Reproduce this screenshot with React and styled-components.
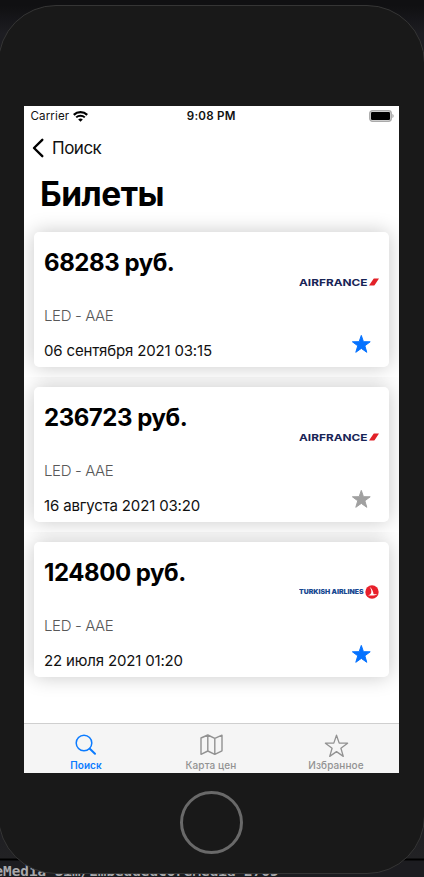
import React from "react";
import styled, { createGlobalStyle, css } from "styled-components";

const GlobalStyle = createGlobalStyle`
  *, *::before, *::after { box-sizing: border-box; }
  body {
    margin: 0;
    overflow: hidden;
    background: #1b1b1f;
    font-family: Inter, "Liberation Sans", sans-serif;
    color: #000;
  }
`;

const Desktop = styled.div`
  position: relative;
  width: 424px;
  height: 877px;
  overflow: hidden;
  background: linear-gradient(#101012 0, #101012 6px, #1d1d22 34px, #1d1d22 820px, #222224 858px, #000 859px, #000 860px, #1c1c20 861px);
`;

const Console = styled.div`
  position: absolute;
  left: -5.5px;
  top: 863px;
  font: bold 14.3px/17px "DejaVu Sans Mono", monospace;
  color: #a9a9ac;
  white-space: pre;
`;

const Phone = styled.div`
  position: relative;
  display: flex;
  flex-direction: column;
  align-items: center;
  width: 427px;
  height: 869px;
  margin: 5px 0 0 -2px;
  padding-top: 100px;
  border: 1px solid #353535;
  border-radius: 58px;
  background: #191919;
`;

const Screen = styled.main`
  display: flex;
  flex-direction: column;
  width: 375px;
  height: 667px;
  overflow: hidden;
  background: #fff;
`;

const HomeButton = styled.div`
  width: 63px;
  height: 63px;
  margin-top: 18px;
  border: 3px solid #696969;
  border-radius: 50%;
`;

const StatusBar = styled.div`
  display: grid;
  grid-template-columns: 1fr auto 1fr;
  align-items: center;
  height: 20px;
  padding: 0 5px 0 6.5px;
  font-size: 11.6px;
  line-height: 20px;
  color: #111;
`;

const Carrier = styled.div`
  display: flex;
  align-items: center;
  gap: 4px;
  letter-spacing: 0.1px;
`;

const Clock = styled.div`
  margin-right: 2px;
  font-weight: 600;
  letter-spacing: 0.25px;
`;

const BatterySlot = styled.div`
  display: flex;
  justify-content: flex-end;
`;

const NavBar = styled.nav`
  display: flex;
  align-items: center;
  height: 44px;
  padding-left: 8px;
  gap: 8px;
  font-size: 17px;
  letter-spacing: -0.5px;
  color: #111;
`;

const Title = styled.h1`
  height: 52px;
  margin: 0;
  padding: 4px 0 0 16px;
  font-size: 33.5px;
  line-height: 41px;
  font-weight: 700;
  letter-spacing: -0.5px;
`;

const List = styled.section`
  display: flex;
  flex-direction: column;
  flex: 1;
`;

const Cell = styled.div`
  height: 155px;
  padding: 10px;
  & + & { clip-path: inset(0 -20px -20px -20px); }
`;

const Card = styled.article`
  display: flex;
  justify-content: space-between;
  height: 135px;
  padding: 0 10px;
  border-radius: 5px;
  background: #fff;
  box-shadow: 0 0 20px rgba(0, 0, 0, 0.22);
`;

const Details = styled.div`
  display: flex;
  flex-direction: column;
  white-space: nowrap;
`;

const Price = styled.div`
  margin-top: 16px;
  font-size: 24px;
  line-height: 30px;
  font-weight: 700;
  letter-spacing: -0.45px;
`;

const Route = styled.div`
  margin-top: 28px;
  font-size: 15px;
  line-height: 20px;
  font-weight: 300;
  letter-spacing: -0.38px;
  color: #585858;
`;

const DateLine = styled.div`
  margin-top: 15px;
  font-size: 15px;
  line-height: 20px;
  letter-spacing: -0.16px;
  color: #111;
`;

const Aside = styled.div`
  display: flex;
  flex-direction: column;
  width: 80px;
  padding-top: 40px;
`;

const Favorite = styled.button`
  display: flex;
  margin: 42px 0 0 52px;
  padding: 0;
  border: 0;
  background: none;
  width: 21px;
  height: 20px;
  color: ${(p) => (p.$active ? "#0572ff" : "#a0a0a0")};
`;

const TabBar = styled.footer`
  display: grid;
  grid-template-columns: repeat(3, 1fr);
  height: 50px;
  flex: none;
  border-top: 1px solid #cfcfcf;
  background: #f5f5f5;
`;

const Tab = styled.div`
  display: flex;
  flex-direction: column;
  align-items: center;
  padding: 7px 1px 0 0;
  font-size: 10px;
  line-height: 12px;
  font-weight: 500;
  letter-spacing: 0.1px;
  color: #929292;
  ${(p) => p.$active && css`color: #0b7bff; font-weight: 600;`}
`;

const TabIcon = styled.div`
  display: flex;
  align-items: center;
  justify-content: center;
  height: 28px;
`;

const Wifi = () => (
  <svg width="15" height="11" viewBox="0 0 15 11" fill="none" stroke="#000">
    <path d="M.8 3.9a9.6 9.6 0 0 1 13.4 0" strokeWidth="2.2" />
    <path d="M3.2 6.4a6.2 6.2 0 0 1 8.6 0" strokeWidth="2" />
    <path d="M5.2 8.5a3.4 3.4 0 0 1 4.6 0L7.5 10.8Z" fill="#000" stroke="none" />
  </svg>
);

const Battery = () => (
  <svg width="25" height="12" viewBox="0 0 25 12">
    <rect x=".7" y=".7" width="21.6" height="10.6" rx="2.8" fill="#d8d8d8" stroke="#aaa" strokeWidth="1.3" />
    <rect x="2" y="2" width="19" height="8" rx="1.2" />
    <path d="M23.3 4v4c.9-.3 1.4-1 1.4-2s-.5-1.7-1.4-2Z" fill="#aaa" />
  </svg>
);

const Back = () => (
  <svg width="12" height="20" viewBox="0 0 12 20" fill="none" stroke="#000" strokeWidth="2.4" strokeLinecap="round" strokeLinejoin="round">
    <path d="M10.3 1.8 2 10l8.300 8.200" />
  </svg>
);

const StarFilled = () => (
  <svg width="21" height="20" viewBox="0 0 21 20" fill="currentColor" stroke="currentColor" strokeLinejoin="round">
    <path d="m10.300 1.400 2.150 6.300 6.750.1-5.350 4 1.950 6.500-5.500-3.900-5.500 3.900 1.950-6.500-5.350-4 6.750-.1Z" />
  </svg>
);

const StarOutline = () => (
  <svg width="25" height="25" viewBox="0 0 25 25" fill="none" stroke="currentColor" strokeWidth="1.3" strokeLinejoin="round">
    <path d="m12.500 2.200 2.700 7.900 8.400.1-6.700 5.100 2.400 8.100-6.800-4.800-6.800 4.800 2.400-8.100-6.700-5.100 8.400-.1Z" />
  </svg>
);

const SearchIcon = () => (
  <svg width="22" height="22" viewBox="0 0 22 22" fill="none" stroke="currentColor" strokeLinecap="round">
    <circle cx="9" cy="9" r="7.800" strokeWidth="1.500" />
    <path d="m14.800 14.800 5.200 5" strokeWidth="2" />
  </svg>
);

const MapIcon = () => (
  <svg width="23" height="22" viewBox="0 0 23 22" fill="none" stroke="currentColor" strokeWidth="1.400" strokeLinejoin="round">
    <path d="m1 4 6.800-3 7 3.400L22 1.200v15.600l-7.200 3.600-7-3.400L1 20.300ZM7.800 1v16m7-12.600v16" />
  </svg>
);

const AirFranceLogo = () => (
  <svg width="80" height="20" viewBox="0 0 80 20">
    <text x="0" y="13.6" textLength="68.500" lengthAdjust="spacingAndGlyphs" fontFamily="Inter, sans-serif" fontWeight="700" fontSize="9.3" fill="#182456">AIRFRANCE</text>
    <path d="M70 13.600 74.400 7c.3-.4.6-.5 1-.5H80l-4.300 6.400c-.3.5-.7.7-1.200.7Z" fill="#e22128" />
  </svg>
);

const TurkishLogo = () => (
  <svg width="80" height="20" viewBox="0 0 80 20">
    <text x="0" y="12.300" textLength="64.500" lengthAdjust="spacingAndGlyphs" fontFamily="Inter, sans-serif" fontWeight="900" fontSize="6.400" fill="#174891">TURKISH AIRLINES</text>
    <circle cx="73" cy="10" r="6.700" fill="#e8202b" />
    <path d="M70.400 4.400c2.700 2.400 4 5.200 4.100 7.700 1.200.3 2.600.3 4-.1-2.200 1.500-5.400 2.100-9.700 1.200 2-.3 3.300-1.200 3.500-3 .2-1.700-.4-3.700-1.900-5.800Z" fill="#fff" />
  </svg>
);

const logos = { airfrance: AirFranceLogo, turkish: TurkishLogo };

const tickets = [
  { price: "68283 руб.", date: "06 сентября 2021 03:15", airline: "airfrance", favorite: true },
  { price: "236723 руб.", date: "16 августа 2021 03:20", airline: "airfrance", favorite: false },
  { price: "124800 руб.", date: "22 июля 2021 01:20", airline: "turkish", favorite: true },
];

const tabs = [
  { label: "Поиск", Icon: SearchIcon, active: true },
  { label: "Карта цен", Icon: MapIcon },
  { label: "Избранное", Icon: StarOutline },
];

function Ticket({ ticket }) {
  const Logo = logos[ticket.airline];
  return (
    <Cell>
      <Card>
        <Details>
          <Price>{ticket.price}</Price>
          <Route>LED - AAE</Route>
          <DateLine>{ticket.date}</DateLine>
        </Details>
        <Aside>
          <Logo />
          <Favorite $active={ticket.favorite} aria-label="Избранное"><StarFilled /></Favorite>
        </Aside>
      </Card>
    </Cell>
  );
}

export default function App() {
  return (
    <>
      <GlobalStyle />
      <Desktop>
        <Console>eMedia_Sim/EmbeddedCoreMedia-2765</Console>
        <Phone>
          <Screen>
            <StatusBar>
              <Carrier>Carrier <Wifi /></Carrier>
              <Clock>9:08 PM</Clock>
              <BatterySlot><Battery /></BatterySlot>
            </StatusBar>
            <NavBar><Back />Поиск</NavBar>
            <Title>Билеты</Title>
            <List>
              {tickets.map((t) => <Ticket key={t.price} ticket={t} />)}
            </List>
            <TabBar>
              {tabs.map(({ label, Icon, active }) => (
                <Tab key={label} $active={active}>
                  <TabIcon><Icon /></TabIcon>
                  {label}
                </Tab>
              ))}
            </TabBar>
          </Screen>
          <HomeButton />
        </Phone>
      </Desktop>
    </>
  );
}
